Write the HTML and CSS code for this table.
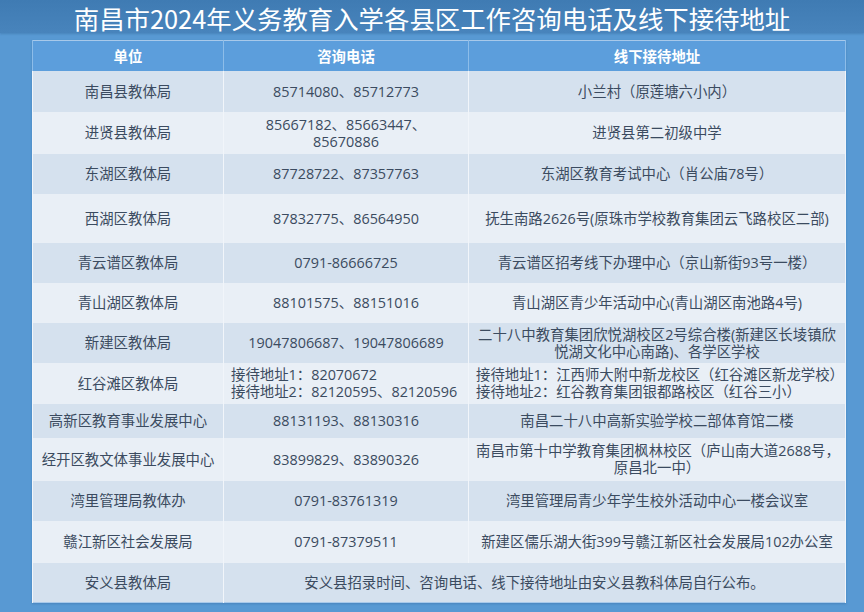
FILE: index.html
```html
<!DOCTYPE html>
<html lang="zh-CN">
<head>
<meta charset="utf-8">
<title>南昌市2024年义务教育入学各县区工作咨询电话及线下接待地址</title>
<link rel="stylesheet" href="styles.css">
</head>
<body>
<div class="page">
  <header class="band">
    <h1 class="title">南昌市2024年义务教育入学各县区工作咨询电话及线下接待地址</h1>
  </header>
  <table class="grid">
    <colgroup>
      <col class="c-unit">
      <col class="c-phone">
      <col class="c-addr">
    </colgroup>
    <thead>
      <tr class="h30">
        <th>单位</th>
        <th>咨询电话</th>
        <th>线下接待地址</th>
      </tr>
    </thead>
    <tbody>
      <tr class="odd h41">
        <td>南昌县教体局</td>
        <td>85714080、85712773</td>
        <td>小兰村（原莲塘六小内）</td>
      </tr>
      <tr class="even h42">
        <td>进贤县教体局</td>
        <td><span class="ln">85667182、85663447、</span><span class="ln">85670886</span></td>
        <td>进贤县第二初级中学</td>
      </tr>
      <tr class="odd h40">
        <td>东湖区教体局</td>
        <td>87728722、87357763</td>
        <td>东湖区教育考试中心（肖公庙78号）</td>
      </tr>
      <tr class="even h49">
        <td>西湖区教体局</td>
        <td>87832775、86564950</td>
        <td>抚生南路2626号(原珠市学校教育集团云飞路校区二部)</td>
      </tr>
      <tr class="odd h40">
        <td>青云谱区教体局</td>
        <td>0791-86666725</td>
        <td>青云谱区招考线下办理中心（京山新街93号一楼）</td>
      </tr>
      <tr class="even h40">
        <td>青山湖区教体局</td>
        <td>88101575、88151016</td>
        <td>青山湖区青少年活动中心(青山湖区南池路4号)</td>
      </tr>
      <tr class="odd h40">
        <td>新建区教体局</td>
        <td>19047806687、19047806689</td>
        <td><span class="ln">二十八中教育集团欣悦湖校区2号综合楼(新建区长堎镇欣</span><span class="ln">悦湖文化中心南路)、各学区学校</span></td>
      </tr>
      <tr class="even h41">
        <td>红谷滩区教体局</td>
        <td class="left"><span class="ln">接待地址1：82070672</span><span class="ln">接待地址2：82120595、82120596</span></td>
        <td class="left"><span class="ln">接待地址1：江西师大附中新龙校区（红谷滩区新龙学校）</span><span class="ln">接待地址2：红谷教育集团银都路校区（红谷三小）</span></td>
      </tr>
      <tr class="odd h34">
        <td>高新区教育事业发展中心</td>
        <td>88131193、88130316</td>
        <td>南昌二十八中高新实验学校二部体育馆二楼</td>
      </tr>
      <tr class="even h43">
        <td>经开区教文体事业发展中心</td>
        <td>83899829、83890326</td>
        <td><span class="ln">南昌市第十中学教育集团枫林校区（庐山南大道2688号，</span><span class="ln">原昌北一中）</span></td>
      </tr>
      <tr class="odd h40">
        <td>湾里管理局教体办</td>
        <td>0791-83761319</td>
        <td>湾里管理局青少年学生校外活动中心一楼会议室</td>
      </tr>
      <tr class="even h42">
        <td>赣江新区社会发展局</td>
        <td>0791-87379511</td>
        <td>新建区儒乐湖大街399号赣江新区社会发展局102办公室</td>
      </tr>
      <tr class="odd h40">
        <td>安义县教体局</td>
        <td colspan="2">安义县招录时间、咨询电话、线下接待地址由安义县教科体局自行公布。</td>
      </tr>
    </tbody>
  </table>
</div>
</body>
</html>
```

FILE: styles.css
```css
html, body {
  margin: 0;
  padding: 0;
}

body {
  width: 864px;
  height: 612px;
  overflow: hidden;
  background: #5899d3;
}

.page {
  width: 864px;
  height: 612px;
  display: flex;
  flex-direction: column;
}

.band {
  height: 33px;
  flex: none;
  background: linear-gradient(180deg, #3f7bb3 0%, #4884bc 100%);
  box-shadow: 0 1px 2px rgba(40, 90, 140, 0.35);
}

.title {
  margin: 0;
  line-height: 36px;
  text-align: center;
  color: #ffffff;
  font-family: "Noto Sans CJK SC", sans-serif;
  font-weight: 400;
  font-size: 25.4px;
  letter-spacing: 0;
}

.grid {
  margin: 7px 0 0 32px;
  width: 813px;
  table-layout: fixed;
  border-collapse: collapse;
  font-family: "Open Sans", "Noto Sans CJK SC", sans-serif;
  font-size: 14.4px;
  line-height: 17px;
  color: #3b4b60;
  border: 1px solid #a8c9ea;
  box-shadow: 0 1px 2px rgba(40, 90, 140, 0.3);
}

.c-unit { width: 191px; }
.c-phone { width: 245px; }
.c-addr { width: 377px; }

.grid th {
  background: #5c9edc;
  color: #ffffff;
  font-family: "Noto Sans CJK SC", sans-serif;
  font-weight: 700;
  font-size: 14.4px;
  border-left: 1px solid #8dbde9;
  border-right: 1px solid #8dbde9;
  padding: 0;
  vertical-align: middle;
  text-align: center;
}

.grid td {
  padding: 0 7px;
  text-align: center;
  vertical-align: middle;
  white-space: nowrap;
  border-left: 1px solid #f1f5fa;
  border-right: 1px solid #f1f5fa;
}

.grid td.left {
  text-align: left;
}

.ln {
  display: block;
  height: 17px;
  line-height: 17px;
}

.odd td { background: #d5e1ee; }
.even td { background: #e9eff6; }

.h30 { height: 30px; }
.h34 { height: 34px; }
.h40 { height: 40px; }
.h41 { height: 41px; }
.h42 { height: 42px; }
.h43 { height: 43px; }
.h49 { height: 49px; }
```
